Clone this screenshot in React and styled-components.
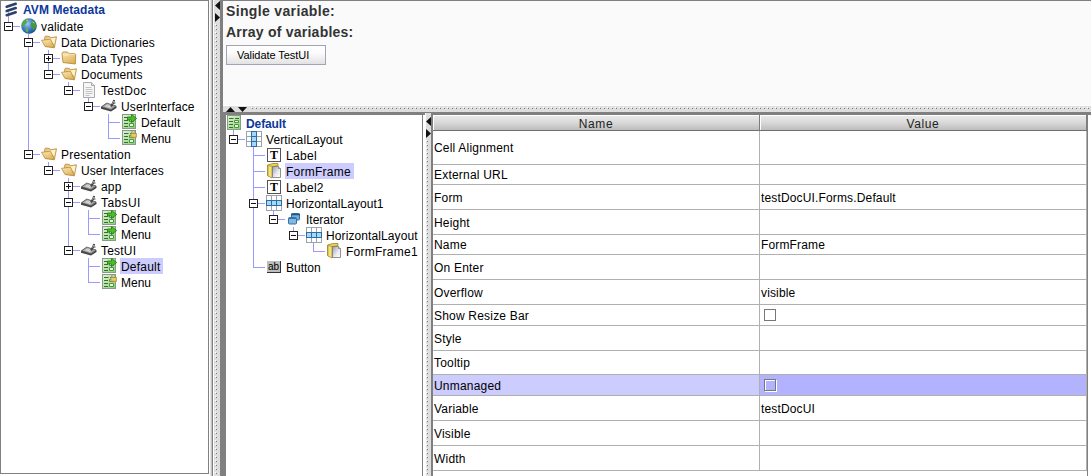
import React from "react";
import styled, { createGlobalStyle } from "styled-components";

const GRAY = "#808080";
const LINE = "#9999ff";

const GlobalStyle = createGlobalStyle`
  * { box-sizing: border-box; }
  body { margin: 0; overflow: hidden; background: #fff; }
`;

const Shell = styled.div`
  display: flex;
  width: 1091px;
  height: 476px;
  overflow: hidden;
  font: 12px/16px "Liberation Sans", Arial, sans-serif;
  color: #000;
  background: #fff;
`;

const Sidebar = styled.div`
  width: 213px;
  padding-bottom: 2px;
  border-right: 1px solid ${GRAY};
  background: linear-gradient(90deg, #fff 210px, #e4e4e4 210px 211px, #c4c4c4 211px);
`;

const SidebarPanel = styled.div`
  width: 209px;
  height: 474px;
  border: 1px solid ${GRAY};
  background: #fff;
`;

const VSplitter = styled.div`
  flex: none;
  width: ${(p) => p.$width}px;
  padding: ${(p) => p.$top}px 0 0 ${(p) => p.$width - 5}px;
  border-left: 1px solid #fff;
  background: #dedede;
  display: flex;
  flex-direction: column;
  overflow: hidden;
  svg { display: block; flex: none; margin-left: -1px; }
`;

const Main = styled.div`
  flex: 1;
  display: flex;
  flex-direction: column;
  min-width: 0;
  border-left: 3px solid ${GRAY};
`;

const Preview = styled.div`
  height: 105px;
  padding: 2px 0 0 3px;
  border-top: 1px solid ${GRAY};
  background: #fafafa;
`;

const PreviewLine = styled.div`
  height: 21px;
  font-size: 14px;
  font-weight: bold;
  color: #333;
  letter-spacing: ${(p) => p.$ls}px;
  line-height: 16px;
  white-space: pre;
`;

const PreviewButton = styled.button`
  display: block;
  width: 100px;
  height: 20px;
  margin: 0;
  padding: 0 0 0 10px;
  border: 1px solid #a3a3b3;
  background: linear-gradient(#fff, #fbfbfb 40%, #e2e2e2);
  font: 11px/18px "Liberation Sans", Arial, sans-serif;
  letter-spacing: -0.05px;
  color: #000;
  text-align: left;
`;

const HSplitter = styled.div`
  height: 7px;
  display: flex;
  align-items: flex-start;
  padding: 1px 0 0 3px;
  border-top: 1px solid #fff;
  background: #dedede;
  svg { display: block; flex: none; }
`;

const Lower = styled.div`
  flex: 1;
  display: flex;
  border-top: 3px solid ${GRAY};
  min-height: 0;
`;

const WidgetPanel = styled.div`
  width: 202px;
  border-left: 3px solid ${GRAY};
  box-shadow: inset -2px 0 #fff, inset -3px 0 ${GRAY};
  background: #fff;
`;

const LowerSplitter = styled.div`
  display: flex;
  margin-top: -2px;
`;

const TablePanel = styled.div`
  flex: 1;
  border-left: 2px solid ${GRAY};
  background: #fff;
`;

/* Tree */

const TreeHeader = styled.div`
  display: flex;
  height: ${(p) => p.$height}px;
  background: linear-gradient(${LINE}, ${LINE}) 7px 100% / 1px 6px no-repeat;
`;

const HeaderIcon = styled.span`
  width: ${(p) => p.$width}px;
  height: 16px;
  svg { display: block; }
`;

const HeaderText = styled.span`
  padding-top: 1px;
  font-weight: bold;
  color: #0d379b;
  white-space: pre;
  letter-spacing: ${(p) => p.$ls}px;
`;

const Row = styled.div`
  display: flex;
  height: 16px;
  margin-left: -1px;
  white-space: pre;
`;

const heights = { none: 0, half: 9, full: 16 };

const Guide = styled.span`
  flex: none;
  width: 20px;
  padding: 4px 0 0 4px;
  background:
    linear-gradient(${LINE}, ${LINE}) 8px 0 / 1px ${(p) => heights[p.$v || "none"]}px no-repeat,
    linear-gradient(${LINE}, ${LINE}) 8px 8px / ${(p) => (p.$h ? 13 : 0)}px 1px no-repeat;
  svg { display: block; }
`;

const IconCell = styled.span`
  flex: none;
  width: 20px;
  padding-left: 1px;
  svg { display: block; }
`;

const Label = styled.span`
  height: 16px;
  padding: 2px ${(p) => (p.$selected ? 3 : 0)}px 0 1px;
  line-height: 15px;
  letter-spacing: ${(p) => p.$ls}px;
  background: ${(p) => (p.$selected ? "#ccccff" : "transparent")};
`;

/* Property table */

const Table = styled.div`
  display: grid;
  grid-template-columns: 327px 327px;
  width: 655px;
  height: 100%;
  border-right: 1px solid ${GRAY};
  align-content: start;
`;

const HeadCell = styled.div`
  height: 16px;
  border-right: 1px solid #7d7d7d;
  border-bottom: 1px solid #6f6f6f;
  box-shadow: inset 1px 1px #fff;
  background: linear-gradient(#ececec, #d9d9d9 50%, #bdbdbd);
  color: #222;
  line-height: 18px;
  letter-spacing: 0.6px;
  text-align: center;
`;

const Cell = styled.div`
  display: flex;
  align-items: center;
  height: ${(p) => p.$height}px;
  padding: 1px 0 0 1px;
  border-right: 1px solid #b0b0b0;
  border-bottom: 1px solid #b0b0b0;
  background: ${(p) => p.$bg || "#fff"};
  letter-spacing: ${(p) => p.$ls}px;
  white-space: pre;
`;

const Check = styled.span`
  width: 12px;
  height: 12px;
  margin: -1px 0 0 3px;
  border: 1px solid #777;
  box-shadow: ${(p) => (p.$selected ? "1px 1px #fff, inset 1px 1px #fff" : "none")};
`;

/* Icons */

const Arrow = ({ dir }) => {
  const d = {
    left: "M5 0v9L0 4.5z",
    right: "M0 0v9l5-4.5z",
    up: "M0 5h9L4.5 0z",
    down: "M0 0h9L4.500 5z",
  }[dir];
  const tall = dir === "left" || dir === "right";
  return (
    <svg width={tall ? 5 : 9} height={tall ? 9 : 5}>
      <path d={d} fill="#111" />
    </svg>
  );
};

const Grip = ({ id, width, height }) => (
  <svg width={width} height={height} shapeRendering="crispEdges">
    <defs>
      <pattern id={id} width="4" height="4" patternUnits="userSpaceOnUse">
        <rect width="1" height="1" fill="#fff" />
        <rect x="1" y="1" width="1" height="1" fill="#777" />
      </pattern>
    </defs>
    <rect width={width} height={height} fill={`url(#${id})`} />
  </svg>
);

const Spacer = styled.span`
  flex: none;
  width: ${(p) => p.$size}px;
  height: ${(p) => p.$size}px;
`;

const Expander = ({ open }) => (
  <svg width="9" height="9" shapeRendering="crispEdges">
    <rect x=".5" y=".5" width="8" height="8" fill="#fff" stroke="#222" />
    <path d={open ? "M2 4.500h5" : "M2 4.500h5M4.500 2v5"} stroke="#111" />
  </svg>
);

const Svg = ({ children }) => (
  <svg width="16" height="16" viewBox="0 0 16 16">
    {children}
  </svg>
);

const Logo = () => (
  <Svg>
    <path d="M6 6.300L15 3.300M6 10.500L15 7.500M6 14.700L15 11.700" stroke="#2c4068" strokeWidth="2.500" strokeLinecap="round" transform="translate(-.3 -.5)" />
  </Svg>
);

const Globe = () => (
  <Svg>
    <defs>
      <radialGradient id="sea" cx=".4" cy=".35" r=".7">
        <stop offset="0" stopColor="#9fcbf2" />
        <stop offset=".6" stopColor="#3577c2" />
        <stop offset="1" stopColor="#1a4a8c" />
      </radialGradient>
    </defs>
    <circle cx="8" cy="8" r="7.800" fill="url(#sea)" />
    <path d="M1.500 4.500Q4 .8 7 .8L8 2 6 3.500 5.500 5.500 3.500 6.500 4 8.500 2.500 9 .8 7z" fill="#5aa544" />
    <path d="M10 5l2-2.500 2 1.500 1.300 4-1.300 3-2 1.500-.8-3.500-1.700-1z" fill="#469a38" />
    <path d="M4.500 10l2.500.8.3 2-1 2-1.800-2z" fill="#68b14e" />
    <path d="M5 3l2-1M11.500 4l2 1" stroke="#a5d58a" />
  </Svg>
);

const FolderDefs = () => (
  <defs>
    <linearGradient id="fold" x2=".6" y2="1">
      <stop offset="0" stopColor="#fbeab8" />
      <stop offset="1" stopColor="#dfb258" />
    </linearGradient>
  </defs>
);

const FolderOpen = () => (
  <Svg>
    <FolderDefs />
    <path d="M3.500 4l1-2 4 .5.8 1.200L15.500 2.800 13.500 13 5 12.500z" fill="#ecca80" stroke="#b48a3c" strokeWidth=".8" />
    <path d="M6 5l8.500-1.200-1 6z" fill="#fff3cf" />
    <path d="M.6 6.300L9.500 5.200 13.500 13.800 4 12.500z" fill="url(#fold)" stroke="#b48a3c" strokeWidth=".8" />
  </Svg>
);

const Folder = () => (
  <Svg>
    <FolderDefs />
    <path d="M1 3.500L2 2h4.500l1.500 1.500h6l.7 1-.4 9.500L2 12.500z" fill="url(#fold)" stroke="#ac8234" strokeWidth=".8" />
    <path d="M2 5l5 .2 1.200-1H14" stroke="#fff2c8" fill="none" strokeWidth=".8" />
  </Svg>
);

const Doc = () => (
  <Svg>
    <path d="M2.500.5h8l3 3v12h-11z" fill="#f6f6f6" stroke="#aaa" />
    <path d="M10.500.5v3h3" fill="#ddd" stroke="#aaa" />
    <path d="M4.500 5.500h6M4.500 7.500h7M4.500 9.500h7M4.500 11.500h7M4.500 13.500h4" stroke="#c3c3c3" />
  </Svg>
);

const Tablet = () => (
  <Svg>
    <path d="M0 8.800L5.500 5 15.500 8V10L10 13.500 0 10.800z" fill="#444" />
    <path d="M.7 8.800L5.700 5 15 8 10 11.800z" fill="#a5a5a5" stroke="#555" strokeWidth=".6" />
    <path d="M3.500 8.500L6.500 6.500l5 1.500-2.500 2z" fill="#d3d3d3" />
    <path d="M10 8.500l2-3.500L13.200 2" stroke="#444" strokeWidth="2" />
    <path d="M11.300 6L12.800 3" stroke="#ccc" strokeWidth=".8" />
    <path d="M11.500 5.500L14.500 5" stroke="#555" />
  </Svg>
);

const FormBody = () => (
  <>
    <defs>
      <linearGradient id="frm" x2="1" y2="1">
        <stop offset="0" stopColor="#e2f5d8" />
        <stop offset="1" stopColor="#86cf70" />
      </linearGradient>
    </defs>
    <rect x="1.500" y=".5" width="13" height="14" fill="url(#frm)" stroke="#8a9a88" />
    <path d="M3 3.500h4.500M9 3.500h4M3 6.500h4M3 9.500h4M3 12.500h4" stroke="#3a6a36" />
    <path d="M8.500 5.500h4v2h-4zM8.500 9.500h4v3h-4z" fill="#e9f9e2" stroke="#4c9444" />
  </>
);

const Form = () => (
  <Svg>
    <FormBody />
  </Svg>
);

const FormArrow = () => (
  <Svg>
    <FormBody />
    <path d="M6.500 3H10.500V.4L15.700 4.500 10.500 8.600V6H6.500z" fill="#4cbc28" stroke="#1f7a12" strokeWidth=".8" />
  </Svg>
);

const FormLock = () => (
  <Svg>
    <FormBody />
    <path d="M10.800 4V2a1.700 1.700 0 0 1 3.400 0V4" fill="none" stroke="#9a8f70" />
    <rect x="9.900" y="3.400" width="5.400" height="3.800" fill="#edcb64" stroke="#a98a3a" strokeWidth=".8" />
  </Svg>
);

const GridIcon = ({ rows }) => (
  <Svg>
    <g transform={rows ? "translate(16 0) rotate(90)" : undefined} shapeRendering="crispEdges">
      <path d="M0 0h16v16H0z" fill="#98a4b0" />
      <path d="M1 1h4v4H1zM1 6h4v4H1zM1 11h4v4H1zM11 1h4v4h-4zM11 6h4v4h-4zM11 11h4v4h-4z" fill="#fff" />
      <path d="M5 0h6v16H5z" fill="#2d6e9e" />
      <path d="M6 1h4v4H6zM6 6h4v4H6zM6 11h4v4H6z" fill="#a3d8fa" />
    </g>
  </Svg>
);

const LetterBox = styled.span`
  display: block;
  width: 14px;
  height: 14px;
  margin: 1px 0 0 1px;
  border: 1px solid #555;
  background: #fff;
  font: bold 12px/12px "Liberation Serif", serif;
  text-align: center;
`;

const ButtonBox = styled.span`
  display: block;
  width: 14px;
  height: 12px;
  margin: 2px 0 0 1px;
  border: solid #333;
  border-width: 0 1px 1px 0;
  background: #bebebe;
  font: 10px/11px "Liberation Sans", Arial, sans-serif;
  letter-spacing: 0;
  text-align: center;
`;

const Frame = () => (
  <Svg>
    <defs>
      <linearGradient id="page" x2="1" y2="1">
        <stop offset="0" stopColor="#9b9ba5" />
        <stop offset=".6" stopColor="#ececf0" />
        <stop offset="1" stopColor="#fff" />
      </linearGradient>
    </defs>
    <path d="M1.500 2L7 .5h5v2L6 4v10.500L1.500 12.500z" fill="#ecd451" stroke="#9a8423" strokeWidth=".8" />
    <path d="M2 2.500L6 3.500V15l-4-2z" fill="#f4e27a" stroke="#9a8423" strokeWidth=".6" />
    <path d="M6.500 3.500h6l2 2v9h-8z" fill="url(#page)" stroke="#777" strokeWidth=".8" />
    <path d="M12.500 3.500v2h2" fill="#fff" stroke="#777" strokeWidth=".8" />
  </Svg>
);

const Stack = () => (
  <Svg>
    <rect x="5.500" y="2.500" width="8" height="6.500" rx="1" fill="#74b2dc" stroke="#3570a0" />
    <path d="M5 3.500h9" stroke="#1d5587" strokeWidth="1.500" />
    <rect x="2.500" y="6.500" width="8" height="6.500" rx="1" fill="#7fb9e2" stroke="#3570a0" />
    <path d="M3 7.500h7" stroke="#3674a5" />
  </Svg>
);

const icons = {
  globe: <Globe />,
  open: <FolderOpen />,
  folder: <Folder />,
  doc: <Doc />,
  tablet: <Tablet />,
  arrow: <FormArrow />,
  lock: <FormLock />,
  cols: <GridIcon />,
  rows: <GridIcon rows />,
  text: <LetterBox>T</LetterBox>,
  button: <ButtonBox>ab</ButtonBox>,
  frame: <Frame />,
  stack: <Stack />,
};

/* guides: one letter per level. "f" full line, "h" line down to the middle, "-" empty.
   box: "+" or "-" for an expander on the last level. */
const metadata = [
  ["h", "-", "globe", "validate", 0.15],
  ["-f", "-", "open", "Data Dictionaries", 0.15],
  ["-ff", "+", "folder", "Data Types", 0.15],
  ["-fh", "-", "open", "Documents", 0.1],
  ["-f-h", "-", "doc", "TestDoc", 0.3],
  ["-f--h", "-", "tablet", "UserInterface", 0.12],
  ["-f---f", "", "arrow", "Default", 0.2],
  ["-f---h", "", "lock", "Menu", 0],
  ["-h", "-", "open", "Presentation", 0.2],
  ["--h", "-", "open", "User Interfaces", 0.1],
  ["---f", "+", "tablet", "app", 0.2],
  ["---f", "-", "tablet", "TabsUI", 0.4],
  ["---ff", "", "arrow", "Default", 0.2],
  ["---fh", "", "arrow", "Menu", 0],
  ["---h", "-", "tablet", "TestUI", 0.2],
  ["----f", "", "arrow", "Default", 0.2, true],
  ["----h", "", "lock", "Menu", 0],
];

const widgets = [
  ["h", "-", "cols", "VerticalLayout", 0.1],
  ["-f", "", "text", "Label", 0.3],
  ["-f", "", "frame", "FormFrame", 0.25, true],
  ["-f", "", "text", "Label2", 0.3],
  ["-f", "-", "rows", "HorizontalLayout1", 0.05],
  ["-fh", "-", "stack", "Iterator", 0],
  ["-f-h", "-", "rows", "HorizontalLayout", 0.1],
  ["-f--h", "", "frame", "FormFrame1", 0.25],
  ["-h", "", "button", "Button", 0],
];

const verticals = { f: "full", h: "half", "-": "none" };

const Tree = ({ items }) =>
  items.map(([guides, box, icon, text, ls, selected], i) => (
    <Row key={i}>
      {[...guides].map((g, n) => {
        const last = n === guides.length - 1;
        return (
          <Guide key={n} $v={verticals[g]} $h={last}>
            {last && box && <Expander open={box === "-"} />}
          </Guide>
        );
      })}
      <IconCell>{icons[icon]}</IconCell>
      <Label $ls={ls} $selected={selected}>{text}</Label>
    </Row>
  ));

const properties = [
  ["Cell Alignment", "", 34],
  ["External URL", "", 20],
  ["Form", "testDocUI.Forms.Default", 25],
  ["Height", "", 25],
  ["Name", "FormFrame", 20],
  ["On Enter", "", 25],
  ["Overflow", "visible", 25],
  ["Show Resize Bar", "check", 21],
  ["Style", "", 25],
  ["Tooltip", "", 24],
  ["Unmanaged", "check", 21, true],
  ["Variable", "testDocUI", 25],
  ["Visible", "", 25],
  ["Width", "", 25],
];

export default function App() {
  return (
    <Shell>
      <GlobalStyle />
      <Sidebar>
        <SidebarPanel>
          <TreeHeader $height={17}>
            <HeaderIcon $width={22}><Logo /></HeaderIcon>
            <HeaderText $ls={0.08}>AVM Metadata</HeaderText>
          </TreeHeader>
          <Tree items={metadata} />
        </SidebarPanel>
      </Sidebar>
      <VSplitter $width={7} $top={1}>
        <Arrow dir="left" />
        <Spacer $size={3} />
        <Arrow dir="right" />
        <Spacer $size={2} />
        <Grip id="grip-a" width={4} height={460} />
      </VSplitter>
      <Main>
        <Preview>
          <PreviewLine $ls={0.35}>Single variable:</PreviewLine>
          <PreviewLine $ls={0.24}>Array of variables:</PreviewLine>
          <PreviewButton>Validate TestUI</PreviewButton>
        </Preview>
        <HSplitter>
          <Arrow dir="up" />
          <Spacer $size={3} />
          <Arrow dir="down" />
          <Spacer $size={4} />
          <Grip id="grip-b" width={845} height={4} />
        </HSplitter>
        <Lower>
          <WidgetPanel>
            <TreeHeader $height={16}>
              <HeaderIcon $width={20}><Form /></HeaderIcon>
              <HeaderText $ls={-0.1}>Default</HeaderText>
            </TreeHeader>
            <Tree items={widgets} />
          </WidgetPanel>
          <LowerSplitter>
            <VSplitter $width={6} $top={4}>
              <Arrow dir="left" />
              <Spacer $size={3} />
              <Arrow dir="right" />
              <Spacer $size={2} />
              <Grip id="grip-c" width={4} height={340} />
            </VSplitter>
          </LowerSplitter>
          <TablePanel>
            <Table>
              <HeadCell>Name</HeadCell>
              <HeadCell>Value</HeadCell>
              {properties.map(([name, value, height, selected]) => (
                <React.Fragment key={name}>
                  <Cell $height={height} $ls={0.2} $bg={selected && "#ccccff"}>{name}</Cell>
                  <Cell $height={height} $ls={0.15} $bg={selected && "#b2b2ff"}>
                    {value === "check" ? <Check $selected={selected} /> : value}
                  </Cell>
                </React.Fragment>
              ))}
            </Table>
          </TablePanel>
        </Lower>
      </Main>
    </Shell>
  );
}
